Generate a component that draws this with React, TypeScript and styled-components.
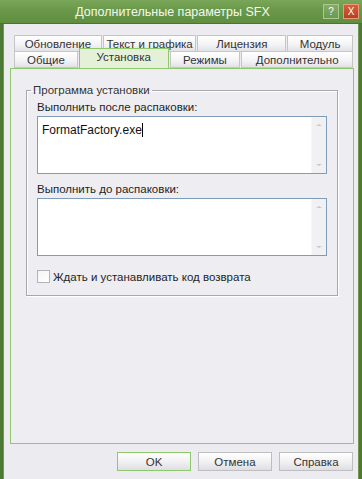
import React from "react";
import styled, { createGlobalStyle } from "styled-components";

const Global = createGlobalStyle`
	html, body { margin: 0; padding: 0; background: #ecebf0; }
	body { font-family: "Liberation Sans", Arial, sans-serif; font-size: 11px; color: #1e1e1e; }
`;

const Window = styled.div`
	width: 362px;
	height: 479px;
	display: flex;
	flex-direction: column;
	background: #4d7a33;
	box-sizing: border-box;
	padding: 0 3px;
`;

const TitleBar = styled.div`
	height: 23px;
	margin: 0 -3px;
	display: flex;
	align-items: center;
	background: linear-gradient(#7aa659, #6a9a49 40%, #5f8e40);
	border-bottom: 1px solid #4a7530;
`;

const Title = styled.div`
	flex: 1;
	text-align: center;
	color: #f4f8ee;
	font-family: "Liberation Sans", Arial, sans-serif;
	font-size: 12.5px;
	padding-left: 22px;
	white-space: nowrap;
`;

const Caps = styled.div`
	display: flex;
	gap: 4px;
	padding-right: 3px;
`;

const CapButton = styled.div<{ $close?: boolean }>`
	width: 16px;
	height: 15px;
	box-sizing: border-box;
	border: 1px solid ${(p) => (p.$close ? "#e89a7c" : "#a9c98f")};
	background: ${(p) => (p.$close ? "linear-gradient(#d5603d, #b8401f)" : "linear-gradient(#86ad67, #6c9850)")};
	color: #fff;
	font-family: "Liberation Sans", Arial, sans-serif;
	font-size: 10px;
	display: flex;
	align-items: center;
	justify-content: center;
`;

const Body = styled.div`
	flex: 1;
	background: #ecebf0;
	display: flex;
	flex-direction: column;
	padding: 11px 4px 0 6px;
	border-left: 1px solid #6d9a50;
	border-right: 1px solid #6d9a50;
`;

const TabRow = styled.div<{ $front?: boolean }>`
	display: flex;
	margin-left: 4px;
	height: 16px;
	position: relative;
	z-index: ${(p) => (p.$front ? 2 : 1)};
`;

const Tab = styled.div<{ $w: number; $active?: boolean }>`
	width: ${(p) => p.$w}px;
	box-sizing: border-box;
	height: ${(p) => (p.$active ? 20 : 17)}px;
	margin-top: ${(p) => (p.$active ? -3 : 0)}px;
	margin-right: 1px;
	display: flex;
	align-items: center;
	justify-content: center;
	white-space: nowrap;
	font-size: 11.5px;
	color: #333;
	border: 1px solid ${(p) => (p.$active ? "#8fc86c" : "#c5c5c8")};
	border-bottom: ${(p) => (p.$active ? "none" : "1px solid #c5c5c8")};
	background: ${(p) =>
		p.$active ? "#e4f1d8" : "linear-gradient(#ffffff, #f3f3f5 60%, #e2e2e6)"};
	padding-bottom: ${(p) => (p.$active ? 4 : 0)}px;
`;

const Panel = styled.div`
	height: 376px;
	box-sizing: border-box;
	border: 1px solid #8fc86c;
	background: #eeedf2;
	padding: 15px 15px 0 15px;
	margin-top: 1px;
`;

const Group = styled.fieldset`
	margin: 0;
	padding: 0 10px 12px 10px;
	border: 1px solid #a8a8ac;
	box-shadow: inset 1px 1px 0 #fff, 1px 1px 0 #fff;
	display: flex;
	flex-direction: column;
`;

const Legend = styled.legend`
	padding: 0 2px;
	margin-left: -6px;
	font-size: 11.5px;
	color: #333;
`;

const Label = styled.div<{ $top: number }>`
	font-size: 11.5px;
	color: #1f1f1f;
	margin: ${(p) => p.$top}px 0 3px;
	white-space: nowrap;
`;

const Memo = styled.div`
	height: 58px;
	flex-shrink: 0;
	box-sizing: border-box;
	border: 1px solid #7f9db9;
	background: #fff;
	display: flex;
`;

const MemoText = styled.div`
	flex: 1;
	padding: 6px 4px;
	font-size: 12px;
	color: #111;
`;

const Caret = styled.span`
	display: inline-block;
	width: 1px;
	height: 14px;
	background: #000;
	vertical-align: -3px;
`;

const ScrollBar = styled.div`
	width: 15px;
	background: #f1f0f3;
	border-left: 1px solid #f7f7f9;
	display: flex;
	flex-direction: column;
	justify-content: space-between;
	align-items: center;
	padding: 7px 0;
	box-sizing: border-box;
`;

const Arrow = styled.div<{ $down?: boolean }>`
	width: 0;
	height: 0;
	border-left: 3px solid transparent;
	border-right: 3px solid transparent;
	${(p) => (p.$down ? "border-top: 2px solid #c8c8cc;" : "border-bottom: 2px solid #c8c8cc;")}
`;

const CheckRow = styled.label`
	display: flex;
	align-items: center;
	gap: 3px;
	margin-top: 14px;
	font-size: 11.5px;
	color: #1f1f1f;
	white-space: nowrap;
`;

const Box = styled.span`
	width: 13px;
	height: 13px;
	box-sizing: border-box;
	border: 1px solid #b4b4b8;
	background: linear-gradient(135deg, #f4f4f6, #fff);
`;

const Footer = styled.div`
	display: flex;
	justify-content: flex-end;
	gap: 7px;
	padding: 8px 1px 0 0;
`;

const Button = styled.div<{ $default?: boolean }>`
	width: 74px;
	height: 19px;
	box-sizing: border-box;
	display: flex;
	align-items: center;
	justify-content: center;
	font-size: 11.5px;
	color: #333;
	border: 1px solid ${(p) => (p.$default ? "#8fc86c" : "#bdbdc2")};
	background: linear-gradient(#ffffff, #f0f0f2 55%, #dedee3);
`;

const Memoed = ({ children }: { children?: React.ReactNode }) => (
	<Memo>
		<MemoText>{children}</MemoText>
		<ScrollBar>
			<Arrow />
			<Arrow $down />
		</ScrollBar>
	</Memo>
);

export default function App() {
	return (
		<>
			<Global />
			<Window>
				<TitleBar>
					<Title>Дополнительные параметры SFX</Title>
					<Caps>
						<CapButton>?</CapButton>
						<CapButton $close>X</CapButton>
					</Caps>
				</TitleBar>
				<Body>
					<TabRow>
						<Tab $w={88}>Обновление</Tab>
						<Tab $w={94}>Текст и графика</Tab>
						<Tab $w={89}>Лицензия</Tab>
						<Tab $w={66}>Модуль</Tab>
					</TabRow>
					<TabRow $front>
						<Tab $w={64}>Общие</Tab>
						<Tab $w={90} $active>Установка</Tab>
						<Tab $w={71}>Режимы</Tab>
						<Tab $w={112}>Дополнительно</Tab>
					</TabRow>
					<Panel>
						<Group>
							<Legend>Программа установки</Legend>
							<Label $top={5}>Выполнить после распаковки:</Label>
							<Memoed>
								FormatFactory.exe<Caret />
							</Memoed>
							<Label $top={9}>Выполнить до распаковки:</Label>
							<Memoed />
							<CheckRow>
								<Box />
								Ждать и устанавливать код возврата
							</CheckRow>
						</Group>
					</Panel>
					<Footer>
						<Button $default>OK</Button>
						<Button>Отмена</Button>
						<Button>Справка</Button>
					</Footer>
				</Body>
			</Window>
		</>
	);
}
